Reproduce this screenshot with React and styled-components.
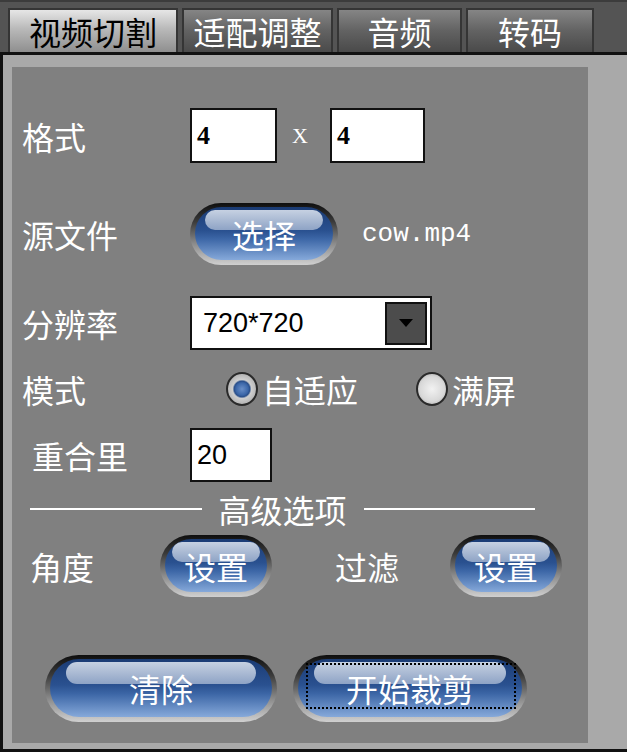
import React from 'react';
import styled, { createGlobalStyle, css } from 'styled-components';

const CJK = `"Noto Sans CJK SC", "DejaVu Sans", sans-serif`;

const GlobalStyle = createGlobalStyle`
  html, body {
    margin: 0;
    padding: 0;
    background: #555;
  }
  #root {
    width: 627px;
    height: 752px;
  }
`;

const Page = styled.div`
  width: 627px;
  height: 752px;
  display: flex;
  flex-direction: column;
  background: #545454;
  border-top: 2px solid #3c3c3c;
  box-sizing: border-box;
  font-family: ${CJK};
  overflow: hidden;
`;

const TabBar = styled.div`
  display: flex;
  gap: 4px;
  height: 50px;
  padding: 6px 0 0 8px;
  box-sizing: border-box;
`;

const Tab = styled.div`
  width: ${(p) => p.$w}px;
  height: 44px;
  box-sizing: border-box;
  border: 2px solid #353535;
  border-bottom: none;
  display: flex;
  align-items: center;
  justify-content: center;
  font-size: 32px;
  line-height: 1;
  ${(p) =>
    p.$active
      ? css`
          background: linear-gradient(#e6e6e6, #b9b9b9 45%, #8f8f8f);
          color: #000;
        `
      : css`
          background: linear-gradient(#858585, #626262 50%, #4a4a4a);
          color: #fff;
        `}
`;

const Frame = styled.div`
  flex: 1;
  display: flex;
  background: #a9a9a9;
  border-top: 3px solid #111;
  border-left: 3px solid #111;
  border-bottom: 3px solid #111;
  padding: 12px 39px 6px 9px;
`;

const Panel = styled.div`
  flex: 1;
  background: #808080;
  display: flex;
  flex-direction: column;
  padding: 41px 0 0 10px;
  color: #fff;
`;

const Row = styled.div`
  display: flex;
  align-items: center;
  height: ${(p) => p.$h}px;
  margin-top: ${(p) => p.$mt || 0}px;
`;

const Label = styled.div`
  width: ${(p) => (p.$w || 168) - (p.$indent || 0)}px;
  padding-left: ${(p) => p.$indent || 0}px;
  font-size: 32px;
  line-height: 1;
  color: #fff;
  flex-shrink: 0;
`;

const TextBox = styled.div`
  width: ${(p) => p.$w}px;
  height: ${(p) => p.$h}px;
  box-sizing: border-box;
  background: #fff;
  border: 2px solid #111;
  color: #000;
  display: flex;
  align-items: center;
  padding-left: 5px;
  font-family: ${(p) => (p.$serif ? '"Liberation Serif", serif' : '"Liberation Sans", sans-serif')};
  font-weight: ${(p) => (p.$serif ? 700 : 400)};
  font-size: ${(p) => (p.$serif ? 26 : 27)}px;
`;

const Times = styled.span`
  font-family: "Liberation Serif", serif;
  font-size: 22px;
  color: #fff;
  margin: 0 22px 0 15px;
`;

const FileName = styled.span`
  font-family: "Liberation Mono", monospace;
  font-size: 26px;
  color: #fff;
  margin-left: 24px;
`;

const PillButton = styled.div`
  width: ${(p) => p.$w}px;
  height: ${(p) => p.$h}px;
  box-sizing: border-box;
  border-radius: ${(p) => p.$h / 2}px;
  padding: 4px 5px 5px;
  background: linear-gradient(#0e0e0e, #3a3a3a 30%, #8a8a8a 65%, #d0d0d0);
  flex-shrink: 0;
`;

const PillFace = styled.div`
  position: relative;
  height: 100%;
  border-radius: 999px;
  background: linear-gradient(#1a3b74, #2a5190 45%, #3c66a6 60%, #86a9da);
  display: flex;
  align-items: center;
  justify-content: center;
  color: #fff;
  font-size: 32px;
  line-height: 1;
  box-sizing: border-box;

  &::before {
    content: '';
    position: absolute;
    left: 7%;
    right: 7%;
    top: 3px;
    height: 38%;
    border-radius: 999px;
    background: linear-gradient(#c6d1e2, #8ea3c5);
  }

  & > span {
    position: relative;
  }
`;

const FocusRing = styled.span`
  position: absolute !important;
  inset: 4px 6px 8px 8px;
  border: 2px dotted #000;
`;

const Select = styled.div`
  width: 242px;
  height: 54px;
  box-sizing: border-box;
  background: #fff;
  border: 2px solid #111;
  display: flex;
  align-items: center;
  justify-content: space-between;
  padding: 0 3px 0 11px;
  font-family: "Liberation Sans", sans-serif;
  font-size: 27px;
  color: #000;
`;

const DropButton = styled.div`
  width: 42px;
  height: 43px;
  box-sizing: border-box;
  background: #4c4c4c;
  border: 2px solid #111;
  display: flex;
  align-items: center;
  justify-content: center;
`;

const RadioGroup = styled.div`
  display: flex;
  align-items: center;
  margin-left: 36px;
`;

const RadioItem = styled.div`
  display: flex;
  align-items: center;
  margin-right: ${(p) => p.$mr || 0}px;
  font-size: 32px;
  line-height: 1;
`;

const RadioCircle = styled.span`
  width: 32px;
  height: 34px;
  box-sizing: border-box;
  border-radius: 50%;
  border: 2px solid #2a2a2a;
  background: radial-gradient(circle at 50% 50%, #f2f2f2 0%, #d8d8d8 60%, #9a9a9a 100%);
  margin-right: 4px;

  ${(p) =>
    p.$checked &&
    css`
      background: radial-gradient(circle at 50% 50%, #6a8fc8 0%, #3b66a8 30%, #2a4f8a 38%, #cfcfcf 46%, #a8a8a8 85%, #6a6a6a 100%);
    `}
`;

const Divider = styled.div`
  display: flex;
  align-items: center;
  gap: 17px;
  height: 33px;
  margin-top: 10px;
  padding-left: 8px;
  width: 505px;
  font-size: 32px;
  line-height: 1;
  color: #fff;

  &::before,
  &::after {
    content: '';
    flex: 1;
    height: 2px;
    background: #fff;
  }
`;

const Spacer = styled.div`
  width: ${(p) => p.$w}px;
  flex-shrink: 0;
`;

const Button = ({ w, h, focus, children }) => (
  <PillButton $w={w} $h={h}>
    <PillFace>
      {focus && <FocusRing />}
      <span>{children}</span>
    </PillFace>
  </PillButton>
);

export default function App() {
  return (
    <>
      <GlobalStyle />
      <Page>
        <TabBar>
          <Tab $w={170} $active>视频切割</Tab>
          <Tab $w={151}>适配调整</Tab>
          <Tab $w={125}>音频</Tab>
          <Tab $w={128}>转码</Tab>
        </TabBar>
        <Frame>
          <Panel>
            <Row $h={55}>
              <Label>格式</Label>
              <TextBox $w={87} $h={55} $serif>4</TextBox>
              <Times>X</Times>
              <TextBox $w={95} $h={55} $serif>4</TextBox>
            </Row>

            <Row $h={62} $mt={40}>
              <Label>源文件</Label>
              <Button w={148} h={62}>选择</Button>
              <FileName>cow.mp4</FileName>
            </Row>

            <Row $h={54} $mt={31}>
              <Label>分辨率</Label>
              <Select>
                720*720
                <DropButton>
                  <svg width="14" height="8" viewBox="0 0 14 8">
                    <path d="M0 0 L14 0 L7 8 Z" fill="#000" />
                  </svg>
                </DropButton>
              </Select>
            </Row>

            <Row $h={34} $mt={22}>
              <Label>模式</Label>
              <RadioGroup>
                <RadioItem $mr={58}>
                  <RadioCircle $checked />
                  自适应
                </RadioItem>
                <RadioItem>
                  <RadioCircle />
                  满屏
                </RadioItem>
              </RadioGroup>
            </Row>

            <Row $h={54} $mt={22}>
              <Label $indent={10}>重合里</Label>
              <TextBox $w={82} $h={54}>20</TextBox>
            </Row>

            <Divider>高级选项</Divider>

            <Row $h={62} $mt={10}>
              <Label $w={138} $indent={8}>角度</Label>
              <Button w={112} h={62}>设置</Button>
              <Spacer $w={63} />
              <Label $w={115}>过滤</Label>
              <Button w={112} h={62}>设置</Button>
            </Row>

            <Row $h={67} $mt={58}>
              <Spacer $w={23} />
              <Button w={232} h={67}>清除</Button>
              <Spacer $w={16} />
              <Button w={234} h={67} focus>开始裁剪</Button>
            </Row>
          </Panel>
        </Frame>
      </Page>
    </>
  );
}
